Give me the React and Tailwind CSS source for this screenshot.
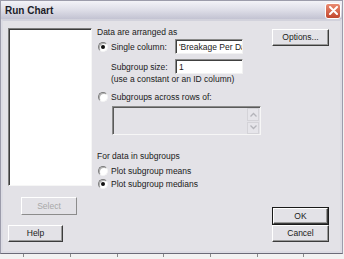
import React from 'react';

const font = "font-['Liberation_Sans','Arial',sans-serif]";

const Radio = ({ checked }) => (
  <span className="w-[10px] h-[10px] shrink-0 rounded-full border border-t-[#7a7a7a] border-l-[#7a7a7a] border-r-[#f4f4f4] border-b-[#f4f4f4] bg-white flex items-center justify-center shadow-[inset_1px_1px_0_#b0b0b0]">
    {checked && <span className="w-[4px] h-[4px] rounded-full bg-[#111]" />}
  </span>
);

const Button = ({ children, className = '', disabled }) => (
  <div
    className={`flex items-center justify-center bg-[#e3e2e7] border border-t-white border-l-white border-r-[#3c3c3c] border-b-[#3c3c3c] shadow-[inset_-1px_-1px_0_#9a9a9a] text-[8.5px] ${disabled ? 'text-[#a8a8a8]' : 'text-[#1a1a1a]'} ${className}`}
  >
    {children}
  </div>
);

const TextBox = ({ value, className = '' }) => (
  <div className={`bg-white border border-t-[#8a8a8a] border-l-[#8a8a8a] border-r-[#f2f2f2] border-b-[#f2f2f2] shadow-[inset_1px_1px_0_#404040] flex items-center pl-[3px] overflow-hidden whitespace-nowrap text-[8.5px] text-[#1a1a1a] ${className}`}>
    {value}
  </div>
);

const Arrow = ({ up }) => (
  <div className="w-[12px] h-[13px] bg-[#e6e5ea] border border-[#d4d3d8] flex items-center justify-center">
    <svg width="7" height="5" viewBox="0 0 7 5">
      <path d={up ? 'M0.5 4.5 L3.5 1.5 L6.5 4.5' : 'M0.5 0.5 L3.5 3.5 L6.5 0.5'} fill="none" stroke="#b4b4ba" strokeWidth="1.3" />
    </svg>
  </div>
);

export default function App() {
  return (
    <div className={`w-[344px] h-[259px] bg-[#f2f2f2] ${font} overflow-hidden`}>
      <div className="w-[343px] h-[254px] flex flex-col border border-[#9c9cab] border-b-[#6b6b78] bg-[#e3e2e7]">
        {/* title bar */}
        <div className="h-[18px] shrink-0 flex items-center justify-between bg-linear-to-b from-[#f3f3f8] via-[#dedee8] to-[#c3c3d2] pl-[4px] pr-[1px]">
          <span className="text-[10px] font-bold text-[#1c1c28] leading-none pt-[2px]">Run Chart</span>
          <div className="w-[16px] h-[16px] mt-[1px] rounded-[3px] border border-white bg-linear-to-b from-[#e98a72] to-[#c2452c] flex items-center justify-center">
            <svg width="9" height="9" viewBox="0 0 9 9">
              <path d="M1 1 L8 8 M8 1 L1 8" stroke="white" strokeWidth="2" strokeLinecap="round" />
            </svg>
          </div>
        </div>

        {/* body */}
        <div className="flex-1 flex border-t-2 border-x-2 border-b-2 border-t-[#d2d2dc] border-x-[#dcdce4] border-b-[#dcdce4]">
          <div className="flex flex-1 pl-[5px] pt-[7px]">
            {/* left column */}
            <div className="w-[84px] flex flex-col">
              <div className="h-[158px] bg-white border border-t-[#7c7c7c] border-l-[#7c7c7c] border-r-[#f6f6f6] border-b-[#f6f6f6] shadow-[inset_1px_1px_0_#3c3c3c]" />
              <Button disabled className="mt-[11px] ml-[13px] w-[56px] h-[18px] border-t-[#f8f8f8] border-l-[#f8f8f8] border-r-[#8c8c8c] border-b-[#8c8c8c] shadow-none">Select</Button>
              <Button className="mt-[10px] w-[55px] h-[17px]">Help</Button>
            </div>

            {/* middle column */}
            <div className="ml-[5px] w-[175px] flex flex-col text-[8.5px] text-[#1a1a1a] leading-[10px] -mt-[1px]">
              <div>Data are arranged as</div>
              <div className="mt-[2px] flex items-center h-[15px]">
                <div className="ml-[1px]"><Radio checked /></div>
                <span className="ml-[3px] w-[64px]">Single column:</span>
                <TextBox value="'Breakage Per Day'" className="w-[68px] h-[15px]" />
              </div>
              <div className="mt-[5px] flex items-center h-[15px]">
                <span className="ml-[14px] w-[64px]">Subgroup size:</span>
                <TextBox value="1" className="w-[68px] h-[15px]" />
              </div>
              <div className="ml-[14px]">(use a constant or an ID column)</div>
              <div className="mt-[8px] flex items-center h-[10px]">
                <div className="ml-[1px]"><Radio /></div>
                <span className="ml-[3px]">Subgroups across rows of:</span>
              </div>
              <div className="mt-[4px] ml-[15px] w-[149px] h-[29px] bg-[#e3e2e7] border border-t-[#8a8a8a] border-l-[#8a8a8a] border-r-[#f6f6f6] border-b-[#f6f6f6] shadow-[inset_1px_1px_0_#5a5a5a] flex justify-end pr-[1px] pt-[1px]">
                <div className="flex flex-col gap-[1px]">
                  <Arrow up />
                  <Arrow />
                </div>
              </div>
              <div className="mt-[16px]">For data in subgroups</div>
              <div className="mt-[5px] flex items-center h-[10px]">
                <div className="ml-[1px]"><Radio /></div>
                <span className="ml-[3px]">Plot subgroup means</span>
              </div>
              <div className="mt-[3px] flex items-center h-[10px]">
                <div className="ml-[1px]"><Radio checked /></div>
                <span className="ml-[3px]">Plot subgroup medians</span>
              </div>
            </div>

            {/* right column */}
            <div className="w-[57px] flex flex-col">
              <Button className="mt-[1px] h-[17px]">Options...</Button>
              <div className="mt-[161px] h-[18px] border border-[#1a1a1a]">
                <Button className="h-full">OK</Button>
              </div>
              <Button className="h-[17px]">Cancel</Button>
            </div>
          </div>
        </div>
      </div>
      {/* strip of the window behind */}
      <div className="h-[5px] flex">
        {[24, 47, 47, 46, 47, 47, 46].map((w, i) => (
          <div key={i} style={{ width: w }} className="h-[3px] border-r border-[#8a8a8a]" />
        ))}
      </div>
    </div>
  );
}
